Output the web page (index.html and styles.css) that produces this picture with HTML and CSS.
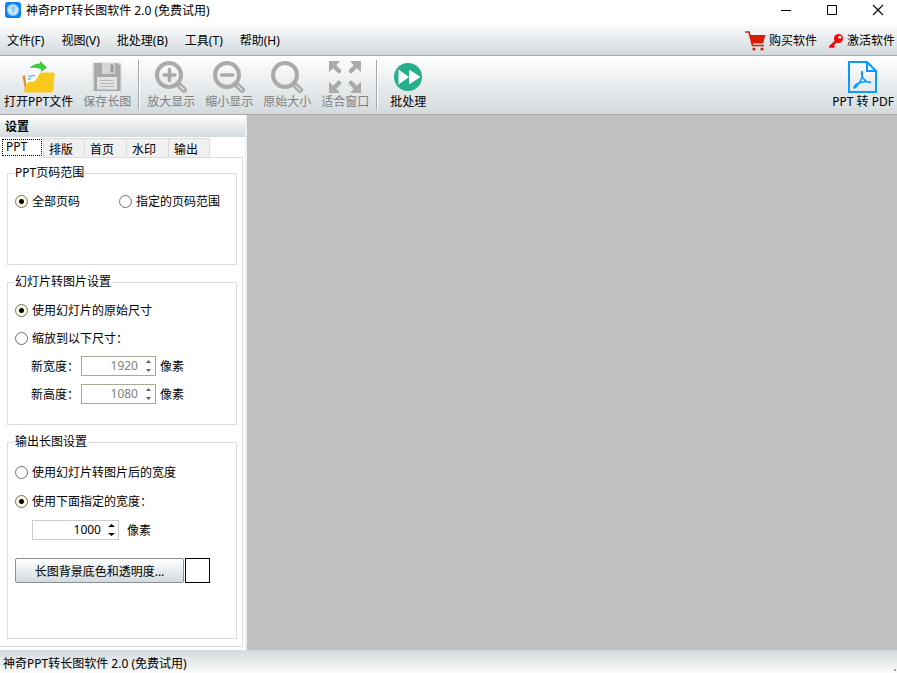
FILE: index.html
```html
<!DOCTYPE html>
<html lang="zh-CN">
<head>
    <meta charset="UTF-8">
    <meta name="viewport" content="width=device-width, initial-scale=1.0">
    <title>神奇PPT转长图软件 2.0 (免费试用)</title>
    <link rel="stylesheet" href="styles.css">
</head>
<body>

    <header class="titlebar">
        <svg class="app-icon" width="16" height="16" viewBox="0 0 16 16" aria-hidden="true">
            <rect width="16" height="16" rx="3" fill="#0a84f5"/>
            <circle cx="8" cy="8" r="6.2" fill="#7cc0fa"/>
            <circle cx="8" cy="8" r="5" fill="#cfe8fd"/>
            <path d="M6 5l4-1v4L7.500 12z" fill="#8cc6f7"/>
        </svg>
        <h1 class="window-title">神奇PPT转长图软件 2.0 (免费试用)</h1>
        <div class="window-buttons">
            <button type="button" aria-label="最小化"><svg width="12" height="12" viewBox="0 0 12 12"><path d="M1 6.5h10" stroke="#000"/></svg></button>
            <button type="button" aria-label="最大化"><svg width="12" height="12" viewBox="0 0 12 12"><path d="M1.500 1.500h9v9h-9z" fill="none" stroke="#000"/></svg></button>
            <button type="button" aria-label="关闭"><svg width="12" height="12" viewBox="0 0 12 12"><path d="M1 1l10 10M11 1L1 11" stroke="#000" stroke-width="1.1"/></svg></button>
        </div>
    </header>

    <nav class="menubar">
        <div class="menus">
            <button type="button">文件(F)</button>
            <button type="button">视图(V)</button>
            <button type="button">批处理(B)</button>
            <button type="button">工具(T)</button>
            <button type="button">帮助(H)</button>
        </div>
        <div class="links">
            <a href="#buy">
                <svg width="21" height="20" viewBox="0 0 21 20" aria-hidden="true">
                    <path d="M0 1h4l3.500 13.500H19" fill="none" stroke="#d81e06" stroke-width="1.600"/>
                    <path d="M4.500 4H20.500l-2.500 8.500H7z" fill="#d81e06"/>
                    <circle cx="9" cy="18" r="1.600" fill="#d81e06"/>
                    <circle cx="17" cy="18" r="1.600" fill="#d81e06"/>
                </svg>
                购买软件
            </a>
            <a href="#activate">
                <svg width="16" height="16" viewBox="0 0 16 16" aria-hidden="true">
                    <path d="M9 7.500L1.500 14.500M3.500 12l2.500 2.500" stroke="#f50505" stroke-width="2.600"/>
                    <circle cx="10.500" cy="5.500" r="4.500" fill="#f50505"/>
                    <circle cx="11.800" cy="4.200" r="1.500" fill="#fff"/>
                </svg>
                激活软件
            </a>
        </div>
    </nav>

    <div class="toolbar">
        <button type="button">
            <svg width="36" height="34" viewBox="2 0 36 34" aria-hidden="true">
                <path d="M3.500 16l3-1 4 16-4 1z" fill="#f08c1c"/>
                <path d="M6 15l14-2 3 10-15 6z" fill="#fff"/>
                <path d="M9 16.500l7-1M9 19.500l3-1" stroke="#7fb0dd" stroke-width="1.500"/>
                <path d="M7 32.500q-2.500 0-2-2L8.500 23q.500-1.500 2-1.500h5l5-7.500q1-1.500 2.500-1.500h11q2 0 1.700 2L34 30.500q-.500 2-2 2z" fill="#f8c81c"/>
                <path d="M11 8Q14 3.500 21 3.500V1l7 6.500-6 4.500V9q-6-2-11-1z" fill="#3ccc3c"/>
            </svg>
            打开PPT文件
        </button>
        <button type="button" disabled>
            <svg width="36" height="34" viewBox="0 0 36 34" aria-hidden="true">
                <rect x="3.500" y="2.500" width="29" height="29" rx="1.500" fill="#d9dbdc"/>
                <path d="M5 3h23l3.500 3v25H5z" fill="#a9a9a9"/>
                <path d="M13 3h13v11H13z" fill="#d6d6d6"/>
                <path d="M21.500 4.500h3v8h-3z" fill="#999"/>
                <path d="M8 17h20v12.500H8z" fill="#e2e2e2"/>
                <path d="M11 20.500h14M11 23.500h14M11 26.500h14" stroke="#b8b8b8"/>
            </svg>
            保存长图
        </button>
        <span class="separator"></span>
        <button type="button" disabled>
            <svg width="36" height="34" viewBox="0 0 36 34" aria-hidden="true">
                <circle cx="16" cy="15" r="12" fill="none" stroke="#aaa" stroke-width="4"/>
                <path d="M11 15h11M16.500 9.500v11" stroke="#aaa" stroke-width="3.500" stroke-linecap="round"/>
                <path d="M25 24l6 6" stroke="#aaa" stroke-width="6" stroke-linecap="round"/>
                <path d="M27 26l4 4" stroke="#dfe2e4" stroke-width="1.500" stroke-linecap="round"/>
            </svg>
            放大显示
        </button>
        <button type="button" disabled>
            <svg width="36" height="34" viewBox="0 0 36 34" aria-hidden="true">
                <circle cx="16" cy="15" r="12" fill="none" stroke="#aaa" stroke-width="4"/>
                <path d="M10.500 15h11.500" stroke="#aaa" stroke-width="3.500" stroke-linecap="round"/>
                <path d="M25 24l6 6" stroke="#aaa" stroke-width="6" stroke-linecap="round"/>
                <path d="M27 26l4 4" stroke="#dfe2e4" stroke-width="1.500" stroke-linecap="round"/>
            </svg>
            缩小显示
        </button>
        <button type="button" disabled>
            <svg width="36" height="34" viewBox="0 0 36 34" aria-hidden="true">
                <circle cx="16" cy="15" r="12" fill="none" stroke="#aaa" stroke-width="4"/>
                <path d="M25 24l6 6" stroke="#aaa" stroke-width="6" stroke-linecap="round"/>
                <path d="M27 26l4 4" stroke="#dfe2e4" stroke-width="1.500" stroke-linecap="round"/>
            </svg>
            原始大小
        </button>
        <button type="button" disabled>
            <svg width="36" height="34" viewBox="0 0 36 34" aria-hidden="true">
                <g fill="#aaa">
                    <path d="M2 1h11l-3 3.500-4.500 4.500L2 12z"/>
                    <path d="M34 1H23l3 3.500 4.500 4.500 3.500 3z"/>
                    <path d="M2 33h11l-3-3.500-4.500-4.500L2 22z"/>
                    <path d="M34 33H23l3-3.500 4.500-4.500 3.500-3z"/>
                </g>
                <path d="M6 5l6 6M30 5l-6 6M6 29l6-6M30 29l-6-6" stroke="#aaa" stroke-width="4.500" stroke-linecap="round"/>
            </svg>
            适合窗口
        </button>
        <span class="separator"></span>
        <button type="button" class="batch">
            <svg width="36" height="34" viewBox="0 0 36 34" aria-hidden="true">
                <circle cx="18" cy="17" r="14" fill="#27ae8a"/>
                <path d="M8.500 9.500L19 17 8.500 24.500zM19 9.500L30.500 17 19 24.500z" fill="#fff"/>
            </svg>
            批处理
        </button>
        <button type="button" class="pdf">
            <svg width="36" height="34" viewBox="0 0 36 34" aria-hidden="true">
                <path d="M4 2h18l9 9v21H4z" fill="none" stroke="#0c98fc" stroke-width="2"/>
                <path d="M22 2v9h9" fill="none" stroke="#0c98fc" stroke-width="2"/>
                <path d="M17 11q-1 4 1 7 3 4.500 8 4.500M17 11q1.500 6-3 12-2 4-5 5 0-3 5-5 5-2 12-1" fill="none" stroke="#0c98fc" stroke-width="1.500"/>
            </svg>
            PPT 转 PDF
        </button>
    </div>

    <main class="workspace">
        <aside class="sidebar">
            <h2 class="panel-title">设置</h2>
            <div class="tabs" role="tablist">
                <button type="button" role="tab" class="tab active" aria-selected="true">PPT</button>
                <button type="button" role="tab" class="tab narrow" aria-selected="false">排版</button>
                <button type="button" role="tab" class="tab" aria-selected="false">首页</button>
                <button type="button" role="tab" class="tab" aria-selected="false">水印</button>
                <button type="button" role="tab" class="tab narrow" aria-selected="false">输出</button>
            </div>
            <form class="tab-page">
                <fieldset class="pages">
                    <legend>PPT页码范围</legend>
                    <div class="row">
                        <label class="choice"><input type="radio" name="pages" checked><span>全部页码</span></label>
                        <label class="choice second"><input type="radio" name="pages"><span>指定的页码范围</span></label>
                    </div>
                </fieldset>

                <fieldset class="slide">
                    <legend>幻灯片转图片设置</legend>
                    <div class="row">
                        <label class="choice"><input type="radio" name="slide" checked><span>使用幻灯片的原始尺寸</span></label>
                    </div>
                    <div class="row">
                        <label class="choice"><input type="radio" name="slide"><span>缩放到以下尺寸：</span></label>
                    </div>
                    <div class="row sub">
                        <label for="new-width">新宽度：</label>
                        <div class="spinner off">
                            <input type="number" id="new-width" value="1920" disabled>
                            <svg width="7" height="14" viewBox="0 0 7 14"><path d="M1 4l2.500-3L6 4zM1 10l2.500 3L6 10z"/></svg>
                        </div>
                        <span>像素</span>
                    </div>
                    <div class="row sub">
                        <label for="new-height">新高度：</label>
                        <div class="spinner off">
                            <input type="number" id="new-height" value="1080" disabled>
                            <svg width="7" height="14" viewBox="0 0 7 14"><path d="M1 4l2.500-3L6 4zM1 10l2.500 3L6 10z"/></svg>
                        </div>
                        <span>像素</span>
                    </div>
                </fieldset>

                <fieldset class="output">
                    <legend>输出长图设置</legend>
                    <div class="row">
                        <label class="choice"><input type="radio" name="output"><span>使用幻灯片转图片后的宽度</span></label>
                    </div>
                    <div class="row">
                        <label class="choice"><input type="radio" name="output" checked><span>使用下面指定的宽度：</span></label>
                    </div>
                    <div class="row sub wide">
                        <div class="spinner">
                            <input type="number" id="out-width" value="1000">
                            <svg width="7" height="14" viewBox="0 0 7 14"><path d="M0 4l3.500-3L7 4zM0 10l3.500 3L7 10z"/></svg>
                        </div>
                        <label for="out-width">像素</label>
                    </div>
                    <div class="background">
                        <button type="button" class="bg-btn">长图背景底色和透明度...</button>
                        <button type="button" class="swatch" aria-label="底色"></button>
                    </div>
                </fieldset>
            </form>
        </aside>
        <section class="canvas"></section>
    </main>

    <footer class="statusbar">
        <span>神奇PPT转长图软件 2.0 (免费试用)</span>
        <span class="grip"></span>
    </footer>

</body>
</html>
```

FILE: styles.css
```css
* {
    box-sizing: border-box;
}

body {
    margin: 0;
    min-height: 100vh;
    display: flex;
    flex-direction: column;
    background-color: white;
    color: black;
    font-family: "Noto Sans", "Noto Sans CJK SC", sans-serif;
    font-size: 12px;
    line-height: 16px;
}

button, input {
    font: inherit;
    color: inherit;
}

button {
    margin: 0;
    padding: 0;
    border: none;
    background: none;
    white-space: nowrap;
}

svg {
    display: block;
    flex: none;
}

/* Title bar */
.titlebar {
    display: flex;
    align-items: center;
    height: 22px;
    padding-left: 5px;
    gap: 5px;
}

.app-icon {
    margin-bottom: 2px;
}

.window-title {
    flex: 1;
    margin: 0;
    font-size: 12px;
    font-weight: normal;
}

.window-buttons {
    display: flex;
}

.window-buttons button {
    display: flex;
    justify-content: center;
    width: 46px;
    padding: 0 0 2px 8px;
}

/* Menu bar */
.menubar {
    display: flex;
    align-items: center;
    justify-content: space-between;
    height: 34px;
    padding: 4px 2px 0 7px;
    border-bottom: 1px solid #a9a9a9;
    background: linear-gradient(#ffffff, #d3dade);
}

.menus {
    display: flex;
    gap: 17px;
}

.links {
    display: flex;
    gap: 11px;
}

.links a {
    display: flex;
    align-items: center;
    gap: 3px;
    color: black;
    text-decoration: none;
}

/* Toolbar */
.toolbar {
    display: flex;
    gap: 10px;
    height: 59px;
    padding: 4px 3px 0 4px;
    border-bottom: 1px solid #a9a9a9;
    background: linear-gradient(#ffffff, #d3dade);
}

.toolbar button {
    display: flex;
    flex-direction: column;
    align-items: center;
}

.toolbar button:disabled {
    color: #808080;
}

.toolbar .batch {
    margin-left: 5px;
}

.toolbar .pdf {
    margin-left: auto;
}

.separator {
    width: 2px;
    height: 50px;
    margin: 0 -3px;
    border-left: 1px solid #a9a9a9;
    border-right: 1px solid white;
}

/* Workspace */
.workspace {
    flex: 1;
    display: flex;
}

.sidebar {
    display: flex;
    flex-direction: column;
    width: 247px;
    border-right: 2px solid #f0f0f0;
}

.canvas {
    flex: 1;
    background-color: #c0c0c0;
}

.panel-title {
    margin: 0;
    padding: 4px 5px 2px;
    font-size: 12px;
    font-weight: bold;
    background: linear-gradient(#ffffff, #d3dade);
}

/* Tabs */
.tabs {
    display: flex;
    height: 21px;
    align-items: flex-end;
}

.tab {
    width: 42px;
    height: 20px;
    padding: 3px 5px 0;
    border: 1px solid #dcdcdc;
    border-left: none;
    background-color: #f0f0f0;
    text-align: left;
}

.tab.narrow {
    width: 41px;
}

.tab.active {
    width: 44px;
    height: 21px;
    padding: 0 0 2px 6px;
    border-top: none;
    border-bottom: none;
    background-color: white;
    outline: 1px dotted black;
    outline-offset: -3px;
}

.tabs::after {
    content: "";
    flex: 1;
    align-self: stretch;
    margin-right: 2px;
    border-bottom: 1px solid #dcdcdc;
}

.tab-page {
    flex: 1;
    display: flex;
    flex-direction: column;
    gap: 9px;
    margin: 0 2px 3px 0;
    padding: 7px 5px 7px 7px;
    border-right: 1px solid #dcdcdc;
    border-bottom: 1px solid #dcdcdc;
}

/* Groups */
fieldset {
    min-width: 0;
    margin: 0;
    padding: 6px 7px;
    border: 1px solid #dcdcdc;
}

legend {
    padding: 0;
}

.pages {
    height: 100px;
}

.slide {
    height: 151px;
}

.output {
    flex: 1;
    padding-top: 8px;
}

.row {
    display: flex;
    align-items: center;
    height: 28px;
}

.output .row {
    margin-bottom: 1px;
}

.row span,
.sub > label {
    padding-top: 2px;
    white-space: nowrap;
}

.choice {
    display: flex;
    align-items: center;
    gap: 4px;
}

.choice.second {
    margin-left: 39px;
}

input[type="radio"] {
    appearance: none;
    width: 13px;
    height: 13px;
    margin: 0;
    border: 1px solid #707070;
    border-radius: 50%;
    background-color: white;
}

input[type="radio"]:checked {
    background: radial-gradient(circle, black 2px, #fffbe0 3px);
}

.sub {
    padding-left: 16px;
    gap: 4px;
}

.sub > label:first-child {
    width: 46px;
}

.sub.wide {
    padding-left: 17px;
    gap: 8px;
}

/* Number boxes */
.spinner {
    display: flex;
    align-items: center;
    width: 75px;
    height: 20px;
    padding-right: 3px;
    border: 1px solid #cccccc;
}

.spinner input {
    flex: 1;
    min-width: 0;
    padding: 0 7px 0 0;
    border: none;
    outline: none;
    background: none;
    text-align: right;
    appearance: textfield;
}

.spinner input::-webkit-inner-spin-button {
    appearance: none;
    margin: 0;
}

.wide .spinner {
    width: 87px;
}

.spinner.off {
    border-color: #aca899;
    color: #808080;
    fill: #606060;
}

.background {
    display: flex;
    gap: 1px;
    margin-top: 14px;
}

.bg-btn {
    width: 169px;
    height: 25px;
    padding-top: 2px;
    border: 1px solid #8c9093;
    border-radius: 2px;
    background: linear-gradient(#ffffff, #d3dade);
}

.swatch {
    width: 25px;
    height: 25px;
    border: 1px solid black;
    background-color: white;
}

/* Status bar */
.statusbar {
    display: flex;
    align-items: center;
    justify-content: space-between;
    height: 23px;
    padding: 4px 1px 0 3px;
    background: linear-gradient(#d3dade, #fafafa);
}

.grip {
    align-self: flex-end;
    width: 2px;
    height: 2px;
    margin-bottom: 2px;
    background-color: #a0a0a0;
}
```
